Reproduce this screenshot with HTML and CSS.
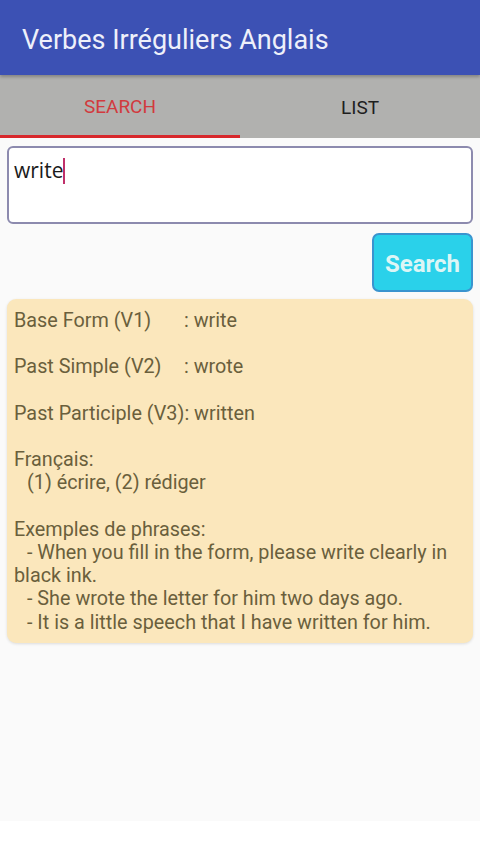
FILE: index.html
```html
<!DOCTYPE html>
<html lang="fr">
<head>
<meta charset="utf-8">
<link rel="stylesheet" href="styles.css">
</head>
<body>
<div class="screen">
  <header class="appbar"><h1 class="title">Verbes Irréguliers Anglais</h1></header>
  <nav class="tabs">
    <div class="tab active">SEARCH</div>
    <div class="tab">LIST</div>
  </nav>
  <main class="content">
    <div class="input"><span class="typed">write</span><span class="caret"></span></div>
    <div class="btn-row"><button class="btn">Search</button></div>
    <section class="card">
      <div class="line"><span class="label">Base Form (V1)</span>: write</div>
      <div class="blank"></div>
      <div class="line"><span class="label">Past Simple (V2)</span>: wrote</div>
      <div class="blank"></div>
      <div class="line"><span class="label">Past Participle (V3)</span>: written</div>
      <div class="blank"></div>
      <div class="line">Français:</div>
      <div class="line indent">(1) écrire, (2) rédiger</div>
      <div class="blank"></div>
      <div class="line">Exemples de phrases:</div>
      <div class="line indent">- When you fill in the form, please write clearly in black ink.</div>
      <div class="line indent">- She wrote the letter for him two days ago.</div>
      <div class="line indent">- It is a little speech that I have written for him.</div>
    </section>
  </main>
</div>
</body>
</html>
```
FILE: styles.css
```css
html, body {
  margin: 0;
  padding: 0;
  background: #ffffff;
}
.screen {
  width: 480px;
  height: 821px;
  background: #fafafa;
  font-family: Roboto, "Liberation Sans", sans-serif;
  display: flex;
  flex-direction: column;
}
.appbar {
  height: 75px;
  background: #3c51b4;
  display: flex;
  align-items: center;
  padding-left: 22px;
  box-shadow: 0 2px 3px rgba(0,0,0,0.25);
  position: relative;
  z-index: 1;
}
.title {
  margin: 0;
  font-weight: 400;
  font-size: 27px;
  color: #eef0fa;
  padding-top: 4px;
}
.tabs {
  height: 63px;
  background: #b1b1af;
  display: flex;
}
.tab {
  flex: 1;
  display: flex;
  align-items: center;
  justify-content: center;
  font-size: 19px;
  color: #1e1e1e;
  padding-top: 2px;
  box-sizing: border-box;
}
.tab.active {
  color: #d23a3e;
  border-bottom: 3px solid #d8282c;
}
.content {
  padding: 8px 7px 0 7px;
  display: flex;
  flex-direction: column;
}
.input {
  height: 78px;
  box-sizing: border-box;
  border: 2px solid #8c8aae;
  border-radius: 6px;
  background: #ffffff;
  padding: 8px 5px;
  display: flex;
  align-items: flex-start;
  font-family: "Open Sans", "Noto Sans", sans-serif;
  font-size: 21px;
  color: #1a1a1a;
}
.typed { line-height: 28px; }
.caret {
  width: 2px;
  height: 26px;
  background: #c0306a;
  margin-top: 2px;
}
.btn-row {
  display: flex;
  justify-content: flex-end;
  margin-top: 9px;
}
.btn {
  width: 101px;
  height: 59px;
  box-sizing: border-box;
  background: #2ad1ea;
  border: 2px solid #3a94cf;
  border-radius: 7px;
  color: #dcf6f6;
  font-family: Roboto, "Liberation Sans", sans-serif;
  font-weight: 700;
  font-size: 24px;
  padding: 3px 0 0 0;
}
.card {
  margin-top: 7px;
  background: #fbe7bc;
  border-radius: 9px;
  padding: 10px 7px 9px 7px;
  box-shadow: 0 1px 3px rgba(0,0,0,0.12);
  color: #6a5f3c;
  font-size: 19.8px;
  line-height: 23.2px;
}
.blank { height: 23.2px; }
.label {
  display: inline-block;
  min-width: 170px;
  white-space: nowrap;
}
.indent { text-indent: 13px; }
```
